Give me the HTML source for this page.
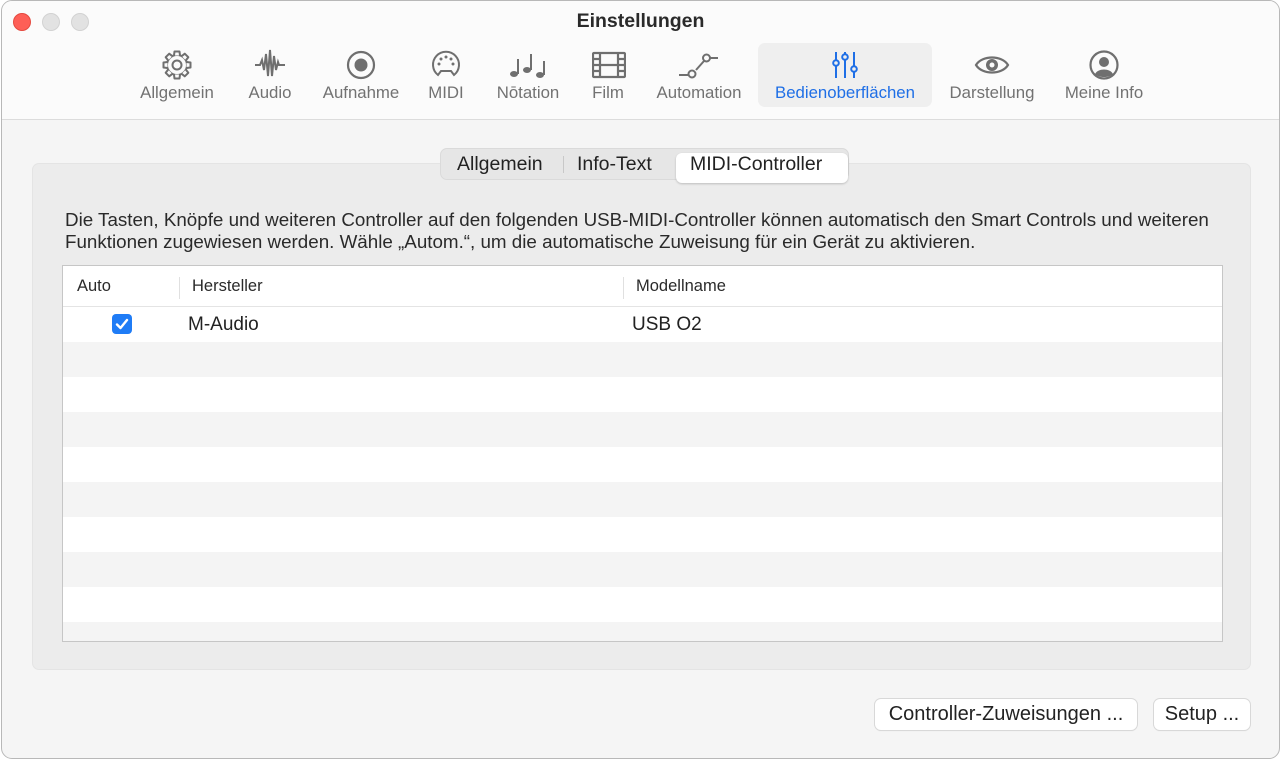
<!DOCTYPE html>
<html><head><meta charset="utf-8"><style>
*{box-sizing:border-box;margin:0;padding:0}
body{width:1282px;height:761px;background:#fff;font-family:"Liberation Sans",sans-serif;position:relative;overflow:hidden}
.win{position:absolute;left:1px;top:0px;width:1279px;height:759px;border:1px solid #b8b8b8;border-radius:11px;background:#f5f5f5;overflow:hidden}
.tb{position:absolute;left:0;top:0;width:100%;height:119px;background:#fbfbfb;border-bottom:1px solid #dcdcdc}
.dot{position:absolute;top:12px;width:18px;height:18px;border-radius:50%;background:#e2e2e2;border:1px solid #d2d2d2}
.title{position:absolute;top:9px;left:0;width:100%;text-align:center;font-size:19.5px;font-weight:bold;color:#2a2a2a}
.it{position:absolute;top:42px;height:64px;text-align:center;font-size:16.8px;color:#727272}
.it svg{position:absolute;top:6px;left:50%;margin-left:-16px}
.it span{position:absolute;top:40px;left:-10px;right:-10px;white-space:nowrap}
.sel{background:#efefef;border-radius:7px;color:#1f6fe6}
.grp{position:absolute;left:30px;top:162px;width:1219px;height:507px;background:#ececec;border-radius:7px;border:1px solid #e4e4e4}
.seg{position:absolute;left:438px;top:147px;width:409px;height:32px;background:#e6e6e6;border:1px solid #dadada;border-radius:7px;font-size:19.5px;color:#222}
.seg div{position:absolute;top:4px}
.segsel{position:absolute;left:235px;top:0px;width:172px;height:30px;background:#fff;border-radius:6px;box-shadow:0 1px 2px rgba(0,0,0,.2)}
.desc{position:absolute;left:63px;top:208px;font-size:18.8px;line-height:22px;color:#2a2a2a;white-space:nowrap}
.tbl{position:absolute;left:60px;top:264px;width:1161px;height:377px;background:#fff;border:1px solid #c6c6c6;overflow:hidden}
.hd{position:absolute;top:0;left:0;width:100%;height:41px;border-bottom:1px solid #e4e4e4;font-size:16.5px;color:#2a2a2a}
.hd span{position:absolute;top:11px}
.sepv{position:absolute;top:11px;width:1px;height:22px;background:#e0e0e0}
.row{position:absolute;left:0;width:100%;height:35px}
.g{background:#f4f4f4}
.btn{position:absolute;top:698px;height:31px;background:#fff;border-radius:6px;box-shadow:0 0 0 1px #d8d8d8,0 1px 1px rgba(0,0,0,.1);font-size:20px;color:#222;text-align:center;line-height:31px;white-space:nowrap}
</style></head><body>
<div class="win">
<div class="tb">
<div class="dot" style="left:11px;background:#fe5f57;border-color:#e5493f"></div>
<div class="dot" style="left:40px"></div>
<div class="dot" style="left:69px"></div>
<div class="title">Einstellungen</div>

<div class="it" style="left:135px;width:80px"><svg width="32" height="32" viewBox="0 0 32 32" fill="none" stroke="#6f6f6f" stroke-width="2" stroke-linejoin="round"><circle cx="16" cy="16" r="10"/><circle cx="16" cy="16" r="4.5"/><g fill="#fbfbfb"><path d="M13 6.5L13.5 2.5H18.5L19 6.5"/><path d="M13 6.5L13.5 2.5H18.5L19 6.5" transform="rotate(45 16 16)"/><path d="M13 6.5L13.5 2.5H18.5L19 6.5" transform="rotate(90 16 16)"/><path d="M13 6.5L13.5 2.5H18.5L19 6.5" transform="rotate(135 16 16)"/><path d="M13 6.5L13.5 2.5H18.5L19 6.5" transform="rotate(180 16 16)"/><path d="M13 6.5L13.5 2.5H18.5L19 6.5" transform="rotate(225 16 16)"/><path d="M13 6.5L13.5 2.5H18.5L19 6.5" transform="rotate(270 16 16)"/><path d="M13 6.5L13.5 2.5H18.5L19 6.5" transform="rotate(315 16 16)"/></g></svg><span>Allgemein</span></div>
<div class="it" style="left:240px;width:56px"><svg width="32" height="32" viewBox="0 0 32 32" fill="none" stroke="#6f6f6f" stroke-width="2"><path d="M1 16h5l2-5 2 10 2-16 2 22 2-26 2 26 2-20 2 14 2-8 1 3h6"/></svg><span>Audio</span></div>
<div class="it" style="left:318px;width:82px"><svg width="32" height="32" viewBox="0 0 32 32"><circle cx="16" cy="16" r="13" fill="none" stroke="#6f6f6f" stroke-width="2.2"/><circle cx="16" cy="16" r="6.5" fill="#6f6f6f"/></svg><span>Aufnahme</span></div>
<div class="it" style="left:420px;width:48px"><svg width="32" height="32" viewBox="0 0 32 32" fill="none" stroke="#6f6f6f" stroke-width="2"><path d="M8 26A13 13 0 1 1 24 26L21 22H11Z"/><g fill="#6f6f6f" stroke="none"><circle cx="9" cy="15" r="1.5"/><circle cx="11" cy="10" r="1.5"/><circle cx="16" cy="8" r="1.5"/><circle cx="21" cy="10" r="1.5"/><circle cx="23" cy="15" r="1.5"/></g></svg><span>MIDI</span></div>
<div class="it" style="left:490px;width:72px"><svg width="40" height="32" viewBox="0 0 40 32" style="margin-left:-20px" fill="#6f6f6f"><ellipse cx="6" cy="25" rx="4" ry="3"/><rect x="9" y="10" width="2" height="15"/><ellipse cx="19" cy="21" rx="4" ry="3"/><rect x="22" y="5" width="2" height="16"/><ellipse cx="32" cy="26" rx="4" ry="3"/><rect x="35" y="12" width="2" height="14"/></svg><span>Nōtation</span></div>
<div class="it" style="left:582px;width:48px"><svg width="34" height="32" viewBox="0 0 34 32" fill="none" stroke="#6f6f6f" stroke-width="2.2"><rect x="1" y="4" width="32" height="24" rx="1"/><path d="M8 4v24M26 4v24M8 16h18M1 10h7M1 16h7M1 22h7M26 10h7M26 16h7M26 22h7"/></svg><span>Film</span></div>
<div class="it" style="left:650px;width:94px"><svg width="40" height="32" viewBox="0 0 40 32" style="margin-left:-20px" fill="none" stroke="#6f6f6f" stroke-width="2"><path d="M0 26h10M17 21L25 12M31 9h8"/><circle cx="13" cy="25" r="3.5"/><circle cx="27.5" cy="9" r="3.5"/></svg><span>Automation</span></div>
<div class="it sel" style="left:756px;width:174px"><svg width="32" height="32" viewBox="0 0 32 32" fill="none" stroke="#1f6fe6" stroke-width="2"><path d="M7 3v8M7 17v12M16 3v2M16 11v18M25 3v14M25 23v6"/><circle cx="7" cy="14" r="2.8"/><circle cx="16" cy="8" r="2.8"/><circle cx="25" cy="20" r="2.8"/></svg><span>Bedienoberflächen</span></div>
<div class="it" style="left:944px;width:92px"><svg width="36" height="32" viewBox="0 0 36 32" style="margin-left:-18px"><path d="M2 16C8 6 28 6 34 16 28 26 8 26 2 16Z" fill="none" stroke="#6f6f6f" stroke-width="2.2"/><circle cx="18" cy="16" r="6" fill="#6f6f6f"/><circle cx="18" cy="16" r="2.5" fill="#fbfbfb"/></svg><span>Darstellung</span></div>
<div class="it" style="left:1058px;width:88px"><svg width="32" height="32" viewBox="0 0 32 32"><circle cx="16" cy="16" r="13.5" fill="none" stroke="#6f6f6f" stroke-width="2.2"/><circle cx="16" cy="13" r="5" fill="#6f6f6f"/><path d="M7 25C10 19 22 19 25 25 21 29 11 29 7 25Z" fill="#6f6f6f"/></svg><span>Meine Info</span></div>
</div>

<div class="grp"></div>
<div class="seg"><div class="segsel"></div><div style="left:16px">Allgemein</div><div style="left:122px;top:7px;width:1px;height:17px;background:#c8c8c8"></div><div style="left:136px">Info-Text</div><div style="left:249px">MIDI-Controller</div></div>
<div class="desc">Die Tasten, Knöpfe und weiteren Controller auf den folgenden USB-MIDI-Controller können automatisch den Smart Controls und weiteren<br>Funktionen zugewiesen werden. Wähle „Autom.“, um die automatische Zuweisung für ein Gerät zu aktivieren.</div>
<div class="tbl">
<div class="hd"><span style="left:14px">Auto</span><div class="sepv" style="left:116px"></div><span style="left:129px">Hersteller</span><div class="sepv" style="left:560px"></div><span style="left:573px">Modellname</span></div>
<div class="row" style="top:41px"><div style="position:absolute;left:49px;top:7px;width:20px;height:20px;background:#1f7cf6;border-radius:4px"><svg width="20" height="20" viewBox="0 0 20 20"><path d="M5 10.5l3.5 3.5L15 6" fill="none" stroke="#fff" stroke-width="2.4" stroke-linecap="round" stroke-linejoin="round"/></svg></div><span style="position:absolute;left:125px;top:7px;font-size:19px;color:#222">M-Audio</span><span style="position:absolute;left:569px;top:7px;font-size:19px;color:#222">USB O2</span></div>
<div class="row g" style="top:76px"></div><div class="row g" style="top:146px"></div><div class="row g" style="top:216px"></div><div class="row g" style="top:286px"></div><div class="row g" style="top:356px"></div>
</div>
<div class="btn" style="left:873px;width:262px">Controller-Zuweisungen ...</div>
<div class="btn" style="left:1152px;width:96px">Setup ...</div>
</div>
</body></html>
